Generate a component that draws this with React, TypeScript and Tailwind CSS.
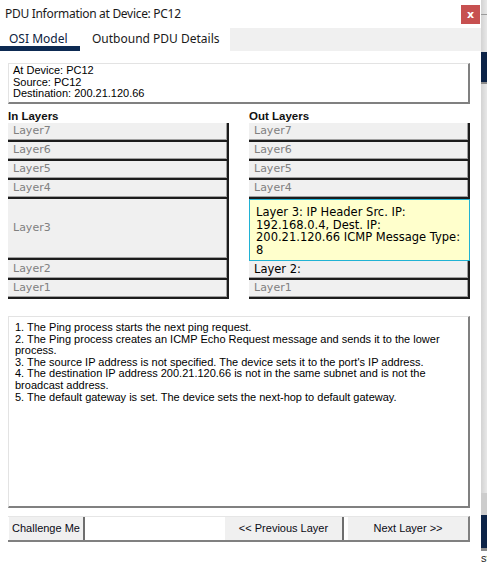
import React from "react";

function Row({ label, cls, dark }: { label: string; cls: string; dark?: boolean }) {
  return (
    <div
      className={
        "flex items-center pl-[5px] bg-[#f0f0f0] border-r-2 border-b-2 border-[#1c1c1c] shadow-[inset_-1px_-1px_0_#a0a0a0] font-['DejaVu_Sans',Verdana,sans-serif] whitespace-nowrap " +
        cls +
        (dark ? " text-[11.5px] text-black" : " text-[11px] text-[#808080]")
      }
    >
      {label}
    </div>
  );
}

export default function App() {
  return (
    <div className="w-[487px] h-[565px] bg-white flex overflow-hidden">
      <div className="w-[481px] h-full flex flex-col bg-white">
        {/* Title bar */}
        <div className="h-[28px] flex items-center justify-between pl-[5px] pr-[1px]">
          <span className="text-[12px] tracking-[-0.3px] text-[#1a1a1a] font-['Noto_Sans',sans-serif]">
            PDU Information at Device: PC12
          </span>
          <div className="w-[19px] h-[19px] mt-[1px] bg-[#c75050] flex items-center justify-center text-white text-[11px] font-bold font-['DejaVu_Sans',sans-serif] leading-none">
            x
          </div>
        </div>

        {/* Tabs */}
        <div className="h-[23px] flex font-['Noto_Sans',sans-serif] text-[12px]">
          <div className="w-[80px] flex items-center pl-[9px] pt-[3px] border-b-[5px] border-[#0d2a52] text-[#0d2240]">
            OSI Model
          </div>
          <div className="w-[150px] flex items-center pl-[12px] pt-[3px] pb-[5px] text-[#1a1a1a]">
            Outbound PDU Details
          </div>
          <div className="flex-1 bg-[#f0f0f0]" />
        </div>

        {/* Content */}
        <div className="flex-1 flex flex-col px-[8px] pt-[12px] font-['Liberation_Sans',Arial,sans-serif]">
          {/* Info box */}
          <div className="w-[462px] h-[41px] border-t border-l border-[#e3e3e3] border-r-2 border-b-2 border-r-[#808080] border-b-[#808080] pl-[4px] pt-[1px] text-[11px] leading-[11.5px] text-black">
            <div>At Device: PC12</div>
            <div>Source: PC12</div>
            <div>Destination: 200.21.120.66</div>
          </div>

          {/* Labels */}
          <div className="mt-[5px] h-[14px] flex gap-[20px] text-[11.5px] leading-[14px] font-bold text-[#111]">
            <div className="w-[221px]">In Layers</div>
            <div className="w-[221px]">Out Layers</div>
          </div>

          {/* Layer columns */}
          <div className="flex gap-[20px]">
            <div className="w-[221px] flex flex-col">
              <Row label="Layer7" cls="h-[19px]" />
              <Row label="Layer6" cls="h-[19px]" />
              <Row label="Layer5" cls="h-[19px]" />
              <Row label="Layer4" cls="h-[19px]" />
              <Row label="Layer3" cls="h-[61px]" />
              <Row label="Layer2" cls="h-[20px]" />
              <Row label="Layer1" cls="h-[19px]" />
            </div>
            <div className="w-[221px] flex flex-col">
              <Row label="Layer7" cls="h-[19px]" />
              <Row label="Layer6" cls="h-[19px]" />
              <Row label="Layer5" cls="h-[19px]" />
              <Row label="Layer4" cls="h-[19px]" />
              <div className="h-[62px] bg-[#ffffcc] border border-[#20b2d4] pl-[6px] pt-[6px] font-['DejaVu_Sans',Verdana,sans-serif] text-[11.5px] leading-[12.7px] text-black whitespace-nowrap">
                <div>Layer 3: IP Header Src. IP:</div>
                <div>192.168.0.4, Dest. IP:</div>
                <div>200.21.120.66 ICMP Message Type:</div>
                <div>8</div>
              </div>
              <Row label="Layer 2:" cls="h-[19px]" dark />
              <Row label="Layer1" cls="h-[19px]" />
            </div>
          </div>

          {/* Description */}
          <div className="mt-[17px] w-[462px] h-[192px] border-t border-l border-[#e3e3e3] border-r-2 border-b-2 border-r-[#808080] border-b-[#808080] pl-[6px] pt-[5px] text-[11px] leading-[11.6px] text-black whitespace-nowrap">
            <div>1. The Ping process starts the next ping request.</div>
            <div>2. The Ping process creates an ICMP Echo Request message and sends it to the lower</div>
            <div>process.</div>
            <div>3. The source IP address is not specified. The device sets it to the port's IP address.</div>
            <div>4. The destination IP address 200.21.120.66 is not in the same subnet and is not the</div>
            <div>broadcast address.</div>
            <div>5. The default gateway is set. The device sets the next-hop to default gateway.</div>
          </div>

          {/* Buttons */}
          <div className="mt-[8px] w-[462px] h-[26px] flex items-stretch border-t border-[#e6e6e6] border-b-2 border-b-[#808080] border-r-2 border-r-[#808080] text-[11px] text-[#0a0a14]">
            <div className="ml-[1px] w-[76px] flex items-center justify-center bg-[#f0f0f0] border-r-2 border-[#6e6e6e]">
              Challenge Me
            </div>
            <div className="flex-1" />
            <div className="w-[119px] flex items-center justify-center bg-[#f0f0f0] border-r-2 border-[#6e6e6e]">
              &lt;&lt; Previous Layer
            </div>
            <div className="w-[4px]" />
            <div className="w-[120px] flex items-center justify-center bg-[#f0f0f0]">
              Next Layer &gt;&gt;
            </div>
          </div>
        </div>
      </div>

      {/* Right strip (background behind window) */}
      <div className="w-[6px] h-full flex flex-col overflow-hidden">
        <div className="h-[14px] bg-gradient-to-r from-[#d3d3d3] to-[#e8e8e8]" />
        <div className="h-[1px] bg-[#9a9a9a]" />
        <div className="h-[37px] bg-gradient-to-r from-[#d3d3d3] to-[#e8e8e8]" />
        <div className="h-[30px] bg-[#0c2347]" />
        <div className="h-[2px] bg-[#8c8c8c]" />
        <div className="flex-1 bg-gradient-to-r from-[#d3d3d3] to-[#e8e8e8]" />
        <div className="h-[22px] bg-[#cdcdcd]" />
        <div className="h-[33px] bg-[#0c2347]" />
        <div className="h-[3px] bg-[#8c8c8c]" />
        <div className="h-[14px] bg-white text-[11px] leading-[14px] text-[#222] whitespace-nowrap font-['Liberation_Sans',Arial,sans-serif]">
          st
        </div>
      </div>
    </div>
  );
}
